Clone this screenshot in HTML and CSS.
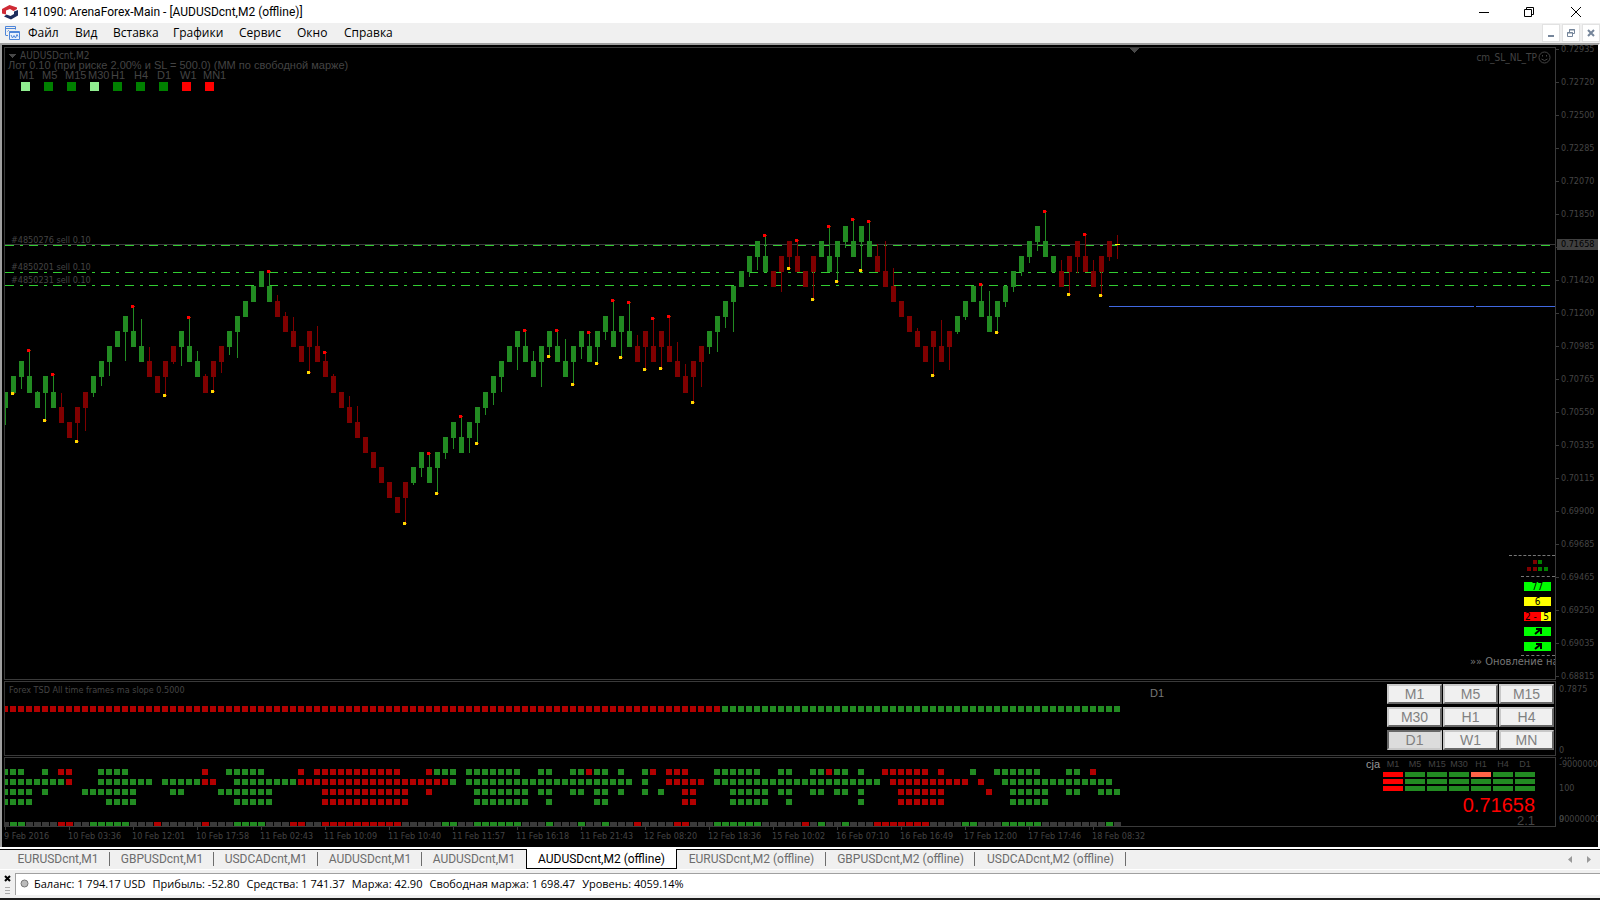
FILE: index.html
```html
<!DOCTYPE html>
<html lang="ru">
<head>
<meta charset="utf-8">
<title>141090: ArenaForex-Main - [AUDUSDcnt,M2 (offline)]</title>
<link rel="stylesheet" href="styles.css">
</head>
<body>
<header class="titlebar">
  <svg class="app-icon" width="16" height="16" viewBox="0 0 16 16"><path d="M0 9.500V5L7.500 1 15 3.500V5L11.500 7 8 5 4 6.500V10.500z" fill="#cf2a35"/><path d="M16 6V11.500L9 15.500 2 12.500 4.500 10.500 8.500 12 12 10V7.500z" fill="#1d2c5c"/></svg>
  <h1 class="title">141090: ArenaForex-Main - [AUDUSDcnt,M2 (offline)]</h1>
  <div class="window-buttons">
    <button type="button" aria-label="Свернуть"><svg width="12" height="12"><path d="M1 6.500h10" stroke="#000"/></svg></button>
    <button type="button" aria-label="Развернуть"><svg width="12" height="12"><path d="M1.500 3.500h7v7h-7zM3.500 3V1.500h7v7H9" fill="none" stroke="#000"/></svg></button>
    <button type="button" aria-label="Закрыть"><svg width="12" height="12"><path d="M1 1l10 10M11 1L1 11" stroke="#000"/></svg></button>
  </div>
</header>
<nav class="menubar">
  <svg class="doc-icon" width="15" height="15" viewBox="0 0 15 15" fill="none" stroke="#4f86d9"><path d="M.5 9.500v-9h10v3M.5 2.500h10M1 9.500h2M2.500 5.500l1-1 1 1"/><path d="M4.500 5.500h10v8h-10zM4.500 6.500h10" fill="#eaf2fd"/><path d="M6 9l1.500 3L9 9.500l1.500 2.500L12 8.500l1 2"/></svg>
  <div class="menus">
    <button type="button" class="m-file">Файл</button><button type="button" class="m-view">Вид</button><button type="button" class="m-insert">Вставка</button><button type="button" class="m-charts">Графики</button><button type="button" class="m-tools">Сервис</button><button type="button" class="m-window">Окно</button><button type="button" class="m-help">Справка</button>
  </div>
  <div class="mdi-buttons">
    <button type="button" aria-label="Свернуть график"><svg width="10" height="10"><path d="M2 8h6" stroke="#75859a" stroke-width="2"/></svg></button>
    <button type="button" aria-label="Восстановить график"><svg width="10" height="10"><path d="M1.500 4.500h5v4h-5zM1 5h6M3.500 4V1.500h5v4H7M3 2h6" fill="none" stroke="#75859a"/></svg></button>
    <button type="button" aria-label="Закрыть график"><svg width="10" height="10"><path d="M2 2l6 6M8 2L2 8" stroke="#75859a" stroke-width="2"/></svg></button>
  </div>
</nav>

<main class="workspace">
  <section class="row row-main">
    <div class="panel">
      <svg class="plot" id="price-plot"></svg>
      <div class="caption">
        <p class="symbol">AUDUSDcnt,M2</p>
        <p class="lot">Лот 0.10 (при риске 2.00% и SL = 500.0) (MM по свободной марже)</p>
        <ul class="frames" id="frames"></ul>
      </div>
      <p class="expert">cm_SL_NL_TP <svg width="13" height="13" viewBox="0 0 13 13" fill="none" stroke="#444"><circle cx="6.500" cy="6.500" r="5.500"/><path d="M4.500 4v1.500M8.500 4v1.500M3.500 8q3 3 6 0"/></svg></p>
      <span class="order order-a">#4850276 sell 0.10</span>
      <span class="order order-b">#4850201 sell 0.10</span>
      <span class="order order-c">#4850231 sell 0.10</span>
      <div class="signals">
        <div class="rule rule-long"></div>
        <svg class="blocks" width="24" height="11"><path d="M6 0h4v4H6zM0 7h4v4H0zM6 7h4v4H6z" fill="#800000"/><path d="M11 0h4v4h-4zM11 7h4v4h-4zM17 7h4v4h-4z" fill="#008000"/></svg>
        <div class="rule"></div>
        <div class="badges">
          <span class="badge lime">77</span>
          <span class="badge yellow">6</span>
          <span class="badge split"><b>2 -</b><i>5</i></span>
          <span class="badge lime"><svg width="8" height="7"><path d="M2 1h5v5M7 1L1 6" stroke="#000" stroke-width="2" fill="none"/></svg></span>
          <span class="badge lime"><svg width="8" height="7"><path d="M2 1h5v5M7 1L1 6" stroke="#000" stroke-width="2" fill="none"/></svg></span>
        </div>
        <div class="rule"></div>
      </div>
      <p class="ticker">»» Оновление на</p>
    </div>
    <div class="axis price-axis"><ol class="prices" id="prices"></ol><span class="last-price">0.71658</span></div>
  </section>

  <section class="row row-slope">
    <div class="panel">
      <svg class="plot" id="slope-plot"></svg>
      <p class="slope-title">Forex TSD All time frames ma slope 0.5000</p>
      <p class="slope-frame">D1</p>
      <div class="period-buttons">
        <button type="button">M1</button><button type="button">M5</button><button type="button">M15</button>
        <button type="button">M30</button><button type="button">H1</button><button type="button">H4</button>
        <button type="button" class="pressed">D1</button><button type="button">W1</button><button type="button">MN</button>
      </div>
    </div>
    <div class="axis ends"><span>0.7875</span><span>0</span></div>
  </section>

  <section class="row row-cja">
    <div class="panel">
      <svg class="plot" id="cja-plot"></svg>
      <div class="cja">
        <span class="cja-name">cja</span>
        <div class="cja-body">
          <div class="cja-grid" id="cja-grid"></div>
          <p class="quote">0.71658</p>
          <p class="spread">2.1</p>
        </div>
      </div>
    </div>
    <div class="axis cja-axis"><span class="top-level">200</span><span>-90000000</span><span class="mid">100</span><span class="low">90000000</span><span class="zero">0</span></div>
  </section>
  <ol class="times" id="times"></ol>
</main>

<nav class="tabs">
  <div class="tab-list">
    <button type="button" class="tab">EURUSDcnt,M1</button><button type="button" class="tab">GBPUSDcnt,M1</button><button type="button" class="tab">USDCADcnt,M1</button><button type="button" class="tab">AUDUSDcnt,M1</button><button type="button" class="tab before-active">AUDUSDcnt,M1</button><button type="button" class="tab wide active">AUDUSDcnt,M2 (offline)</button><button type="button" class="tab">EURUSDcnt,M2 (offline)</button><button type="button" class="tab">GBPUSDcnt,M2 (offline)</button><button type="button" class="tab wide">USDCADcnt,M2 (offline)</button>
  </div>
  <div class="tab-arrows"><button type="button" aria-label="Влево"><svg width="5" height="7"><path d="M4 0v7L0 3.500z" fill="#999"/></svg></button><button type="button" aria-label="Вправо"><svg width="5" height="7"><path d="M1 0v7l4-3.500z" fill="#999"/></svg></button></div>
</nav>
<footer class="terminal">
  <div class="grip"><button type="button" aria-label="Закрыть терминал"><svg width="7" height="7"><path d="M1 1l5 5M6 1L1 6" stroke="#000" stroke-width="2"/></svg></button><svg width="5" height="8"><path d="M0 .5h5M0 3.500h5M0 6.500h5" stroke="#aaa"/></svg></div>
  <div class="account">
    <svg width="9" height="9"><circle cx="4.500" cy="4.500" r="3.500" fill="#bbb" stroke="#777"/></svg>
    <span>Баланс: 1 794.17 USD</span><span>Прибыль: -52.80</span><span>Средства: 1 741.37</span><span>Маржа: 42.90</span><span>Свободная маржа: 1 698.47</span><span>Уровень: 4059.14%</span>
  </div>
</footer>
<div class="taskbar-edge"></div>
<script src="chart.js"></script>
</body>
</html>
```
FILE: styles.css
```css
* { box-sizing: border-box; margin: 0; padding: 0; }
html, body { height: 100%; }
body { display: flex; flex-direction: column; overflow: hidden; background: #f0f0f0; font: 12px/16px Roboto, "Noto Sans", sans-serif; color: #000; }
button { font: inherit; color: inherit; background: none; border: 0; white-space: nowrap; }
ul, ol { list-style: none; }
svg { display: block; flex: none; }

.titlebar { flex: none; height: 23px; display: flex; align-items: center; background: #fff; padding-left: 2px; }
.title { font-size: 12px; font-weight: 400; margin-left: 5px; flex: 1; }
.window-buttons { display: flex; height: 21px; }
.window-buttons button { width: 45px; display: flex; align-items: center; justify-content: center; }
.window-buttons button:last-child { width: 49px; }

.menubar { flex: none; height: 20px; display: flex; align-items: center; padding-left: 5px; }
.menus { flex: 1; display: flex; margin-left: 8px; font-family: "Open Sans", "Noto Sans", sans-serif; }
.menus button { text-align: left; }
.m-file { width: 47px; }
.m-view { width: 38px; }
.m-insert { width: 60px; }
.m-charts { width: 66px; }
.m-tools { width: 58px; }
.m-window { width: 47px; }
.mdi-buttons { display: flex; gap: 2px; }
.mdi-buttons button { width: 18px; height: 18px; background: #fff; border: 1px solid #e2e2e2; display: flex; align-items: center; justify-content: center; }

.workspace { flex: 1; min-height: 0; display: flex; flex-direction: column; background: #000; border: solid #a0a0a0; border-width: 2px 2px 0 2px; border-right-color: #fff; padding: 2px 0 0 2px; color: #444; font: 9px/11px "DejaVu Sans Condensed", "DejaVu Sans", sans-serif; }
.row { display: grid; grid-template-columns: 1fr 42px; grid-template-rows: minmax(0, 1fr); min-height: 0; }
.row-main { flex: 1; margin-bottom: 1px; }
.row-slope { flex: none; height: 75px; margin-bottom: 1px; }
.row-cja { flex: none; height: 70px; }
.panel { position: relative; border: 1px solid #3a3a3a; overflow: hidden; min-width: 0; }
.plot { position: absolute; left: 0; top: 0; width: 100%; height: 100%; }

.caption { position: relative; padding: 2px 0 0 3px; }
.symbol { padding-left: 12px; font-size: 10px; line-height: 11px; }
.lot { font: 11px/9px "Liberation Sans", Arial, sans-serif; }
.frames { display: flex; margin: 1px 0 0 11px; font: 11px/9px "Liberation Sans", Arial, sans-serif; }
.frames li { width: 23px; white-space: nowrap; }
.frames i { display: block; width: 9px; height: 9px; margin: 2px 0 0 2px; background: #008000; }
.frames .bright i { background: #90ee90; }
.frames .down i { background: #f00; }
.expert { position: absolute; right: 4px; top: 3px; display: flex; align-items: center; gap: 1px; font-size: 10px; line-height: 13px; }
.order { position: absolute; left: 6px; line-height: 10px; }
.order-a { top: 187px; }
.order-b { top: 214px; }
.order-c { top: 227px; }

.signals { position: absolute; right: 0; bottom: 23px; display: flex; flex-direction: column; align-items: flex-end; }
.rule { width: 34px; border-top: 1px dashed #777; }
.rule-long { width: 46px; }
.blocks { margin: 4px 4px 5px 0; }
.badges { display: flex; flex-direction: column; gap: 6px; padding: 5px 4px 4px 0; }
.badge { width: 27px; height: 9px; display: flex; align-items: center; justify-content: center; color: #000; font-size: 10px; line-height: 9px; }
.lime { background: #0f0; }
.yellow { background: #ff0; }
.split { justify-content: stretch; }
.split b { flex: 1; background: #f00; font-weight: 400; padding-left: 1px; }
.split i { width: 10px; background: #ff0; font-style: normal; text-align: center; }
.ticker { position: absolute; left: calc(100% - 85px); bottom: 11px; font: 11px/13px "DejaVu Sans Condensed", sans-serif; color: #777; white-space: nowrap; }

.axis { position: relative; overflow: hidden; }
.price-axis { overflow: visible; }
.prices { margin-top: -14px; }
.prices li { height: 33px; line-height: 33px; padding-left: 5px; position: relative; }
.prices li::before { content: ""; position: absolute; left: 0; top: 16px; width: 3px; border-top: 1px solid #3a3a3a; }
.last-price { position: absolute; left: 1px; right: 0; top: 192px; padding-left: 4px; background: #404040; color: #000; }

.slope-title { position: relative; padding: 3px 0 0 4px; }
.slope-frame { position: absolute; left: 1145px; top: 5px; color: #777; font: 11px/13px "Liberation Sans", Arial, sans-serif; }
.period-buttons { position: absolute; right: 1px; top: 2px; display: grid; grid-template-columns: repeat(3, 55px); gap: 3px 1px; }
.period-buttons button { height: 20px; background: #f0f0f0; border: 2px solid; border-color: #c8c8c8 #686868 #686868 #c8c8c8; color: #808080; font: 14px/16px "Liberation Sans", Arial, sans-serif; }
.period-buttons .pressed { background: #dcdcdc; border-color: #686868 #c8c8c8 #c8c8c8 #686868; }
.ends { display: flex; flex-direction: column; justify-content: space-between; padding: 3px 0 0 3px; }

.cja { position: absolute; right: 20px; top: 1px; display: flex; }
.cja-name { color: #999; font: 11px/11px "Liberation Sans", Arial, sans-serif; margin-right: 3px; }
.cja-body { width: 152px; text-align: right; font-family: "Liberation Sans", Arial, sans-serif; }
.cja-grid { display: grid; grid-template-columns: repeat(7, 20px); gap: 2px; text-align: center; }
.cja-grid span { line-height: 11px; white-space: nowrap; }
.cja-grid i { height: 5px; background: #228b22; }
.cja-grid .red { background: #f00; }
.cja-grid .tomato { background: #ff6347; }
.quote { color: #f00; font-size: 20px; line-height: 20px; margin-top: 4px; }
.spread { font-size: 13px; line-height: 12px; }
.cja-axis { padding-left: 3px; }
.cja-axis span { display: block; line-height: 11px; }
.cja-axis .top-level { height: 2px; line-height: 1px; overflow: hidden; }
.cja-axis .mid { margin-top: 13px; }
.cja-axis .low { margin-top: 20px; }
.cja-axis .zero { margin-top: -11px; }

.times { flex: none; height: 20px; display: flex; overflow: hidden; }
.times li { flex: none; width: 64px; padding: 4px 0 0 0; white-space: nowrap; position: relative; }
.times li::before { content: ""; position: absolute; left: 1px; top: 0; height: 3px; border-left: 1px solid #3a3a3a; }

.tabs { flex: none; height: 23px; display: flex; border-top: 2px solid #fff; border-bottom: 1px solid #fff; background: #f0f0f0; color: #6d6d6d; }
.tab-list { flex: 1; display: flex; padding-left: 6px; border-top: 1px solid #000; }
.tab { width: 149px; position: relative; height: 18px; line-height: 18px; text-align: center; }
.tab:nth-child(-n+5) { width: 104px; }
.tab.wide { width: 151px; }
.tab::after { content: ""; position: absolute; right: 0; top: 2px; height: 14px; border-right: 1px solid #6d6d6d; }
.active { background: #fff; color: #000; border: 1px solid #000; border-top: 0; margin-top: -1px; height: 20px; line-height: 20px; }
.before-active::after, .active::after { display: none; }
.tab-arrows { display: flex; gap: 13px; align-items: center; padding-right: 9px; border-top: 1px solid #000; }

.terminal { flex: none; height: 27px; display: flex; padding-top: 3px; }
.grip { width: 15px; display: flex; flex-direction: column; align-items: center; gap: 5px; padding-top: 2px; }
.account { flex: 1; display: flex; align-items: center; gap: 7px; background: #fff; border: solid #a0a0a0; border-width: 1px 0 0 1px; padding: 0 0 2px 4px; margin-bottom: 2px; font-size: 11px; font-family: "Open Sans", "Noto Sans", sans-serif; }
.account svg { margin-right: -2px; }
.taskbar-edge { flex: none; height: 3px; background: #1c1c1c; border-top: 1px solid #f0f0f0; }
```
FILE: chart.js
```js
const rect = (x, y, w, h, fill) => `<rect x="${x}" y="${y}" width="${w}" height="${h}" fill="${fill}"/>`;

// Renko brick tops, one for each price level
const levels = [226, 241, 256, 271, 286, 301, 316, 331, 346, 361, 376, 392, 407, 422, 437, 452, 467, 482, 497, 512];

// level, colour (G/R), wick end; "*" marks a fractal dot at the wick end
const bricks = `11G425 10G393* 9G389 10G350* 11G391 10G420* 11G374* 12R393 13R 12R441* 11R431 10G397 9G386 8G376 7G
6G361 7G306* 8G319 9R347 10R 9R395* 8R364 7G366 8G317* 9G351 10R374 9R391* 8R373 7G355 6G358 5G 4G 3G 4G271* 5R295
6R312 7R317 8R 7R372* 8R326 9R352* 10R374 11R 12R396 13R406 14R 15R 16R 17R 18R 17R523* 16G485 15G477 16G453* 15G493*
14G459 13G449 14G416* 13G453 12G443* 11G415 10G405 9G392 8G 7G370 8G330* 9G351 8G387 7G356* 8G330* 9G339 8G384* 7G359
8G332* 7G363* 6G340 7G300* 6G357* 7G302* 8R335 7R369* 8R318* 7R368* 8R316* 9R342 10R364 9R402* 8R387 7G354 6G352
5G328 4G332 3G 2G277 1G270 2G235* 3R 2R292 1R268* 2R240* 3R 2R299* 1G 2G226* 1G281* 0G248 1G219* 0G270* 1G221*
2R244 3R241 4R268 5R 6R 7R328 8R 7R375* 8R320 7R370 6G334 5G320 4G 5G284* 6G291 5G332* 4G307 3G292 2G276 1G263
0G251 1G211* 2G 3R260 2R294* 1R273 2R234* 3R260 2R295* 1R261`.split(/\s+/);

function drawPrice() {
  let s = '<g transform="translate(-5,-48)" shape-rendering="crispEdges"><path d="M5 244.500H4000" stroke="#3a3a3a"/>';
  for (const y of [245, 272, 285]) s += `<path d="M5 ${y}.500H4000" stroke="#32cd32" stroke-dasharray="9 6 3 6"/>`;
  s += '<path d="M1109 306.500H1474M1476 306.500H4000" stroke="#4169e1"/>';
  let dots = '';
  bricks.forEach((b, i) => {
    const [, k, c, end, dot] = b.match(/^(\d+)([GR])(\d*)(\*?)$/);
    const fill = c === 'G' ? '#228b22' : '#800000', top = levels[k], bottom = levels[+k + 1] + 1, x = 3 + 8 * i;
    s += rect(x, top, 5, bottom - top, fill);
    if (end) {
      const up = +end < top + 5;
      s += up ? rect(x + 2, +end, 1, Math.max(0, top - end), fill) : rect(x + 2, bottom, 1, Math.max(0, end - bottom), fill);
      if (dot) {
        const col = up ? '#f00' : '#ffd700';
        dots += rect(x, end - 1, 3, 3, col) + rect(x + 3, +end, 1, 1, '#a02000');
      }
    }
  });
  s += rect(1117, 235, 1, 24, '#800000') + rect(1115, 244, 5, 1, '#ff0') + dots;
  s += '<path d="M1130 48h9l-4.500 5zM8 54h8l-4 4z" fill="#484848"/></g>';
  document.getElementById('price-plot').innerHTML = s;
}

function drawSlope() {
  let s = '<g transform="translate(-5,-682)">';
  for (let i = 0; i < 140; i++) s += rect(2 + 8 * i, 706, 6, 6, i < 90 ? '#b20000' : '#228b22');
  document.getElementById('slope-plot').innerHTML = s + '</g>';
}

const runs = [
  'G0-2,G5,R7-8,G12-15,R25,G28-32,R37,R39-49,R53,G54-56,G58-64,G67-68,G71-72,R73,G74-75,G77,G80,R81,R83-85,G89-94,G97-98,G101-102,R103,G104-105,G107,R110-115,R117,G121,G124-129,G133-134,R136',
  'G0-7,R8,G12-18,G20-24,R25-26,G29-36,R37-55,G56,G58-78,G80,R83-87,G89-109,R111-120,R122,G125-138',
  'G0-3,G5,G10-16,G21-22,G27-33,R40-50,R53,G59-65,G67-68,G71-72,G74-75,G77,G80,G82,R85-86,G91-95,G97-98,G101-102,G104-105,G107,R112-117,R123,G126-130,G133-134,G137-139',
  'G0-3,G13-16,G29-33,R40-50,G59-65,G68,G74-75,R85-86,G91-95,G98,G107,R112-117,G126-130',
  'N0-139,G1-2,R7-8,G11-15,R19,R25,G29-32,R36-37,R40-49,G55-56,G59-64,G68,G72,G75,R79,R84-85,G89-94,R100,G102,G105,R109-115,G120-121,G125-129,G138'
];

function drawCja() {
  const fills = { G: '#228b22', R: '#b20000', N: '#3a3a3a' };
  let s = '<g transform="translate(-5,-758)">';
  runs.forEach((row, r) => row.split(',').forEach(run => {
    const [a, b = a] = run.slice(1).split('-').map(Number);
    for (let i = a; i <= b; i++) s += r < 4 ? rect(2 + 8 * i, 769 + 10 * r, 6, 6, fills[run[0]]) : rect(2 + 8 * i, 822, 7, 4, fills[run[0]]);
  }));
  document.getElementById('cja-plot').innerHTML = s + '</g>';
}

drawPrice();
drawSlope();
drawCja();

document.getElementById('frames').innerHTML = ['M1 bright', 'M5', 'M15', 'M30 bright', 'H1', 'H4', 'D1', 'W1 down', 'MN1 down']
  .map(f => { const [n, c = ''] = f.split(' '); return `<li class="${c}">${n}<i></i></li>`; }).join('');
document.getElementById('prices').innerHTML = '72935 72720 72500 72285 72070 71850 71635 71420 71200 70985 70765 70550 70335 70115 69900 69685 69465 69250 69035 68815'
  .split(' ').map(p => `<li>0.${p}</li>`).join('');
document.getElementById('times').innerHTML = ['9 Feb 2016', '10 Feb 03:36', '10 Feb 12:01', '10 Feb 17:58', '11 Feb 02:43', '11 Feb 10:09', '11 Feb 10:40', '11 Feb 11:57', '11 Feb 16:18', '11 Feb 21:43', '12 Feb 08:20', '12 Feb 18:36', '15 Feb 10:02', '16 Feb 07:10', '16 Feb 16:49', '17 Feb 12:00', '17 Feb 17:46', '18 Feb 08:32']
  .map(t => `<li>${t}</li>`).join('');
document.getElementById('cja-grid').innerHTML = ['M1', 'M5', 'M15', 'M30', 'H1', 'H4', 'D1'].map(n => `<span>${n}</span>`).join('')
  + Array.from({ length: 21 }, (_, i) => `<i class="${i % 7 === 0 ? 'red' : i === 4 ? 'tomato' : ''}"></i>`).join('');
```
